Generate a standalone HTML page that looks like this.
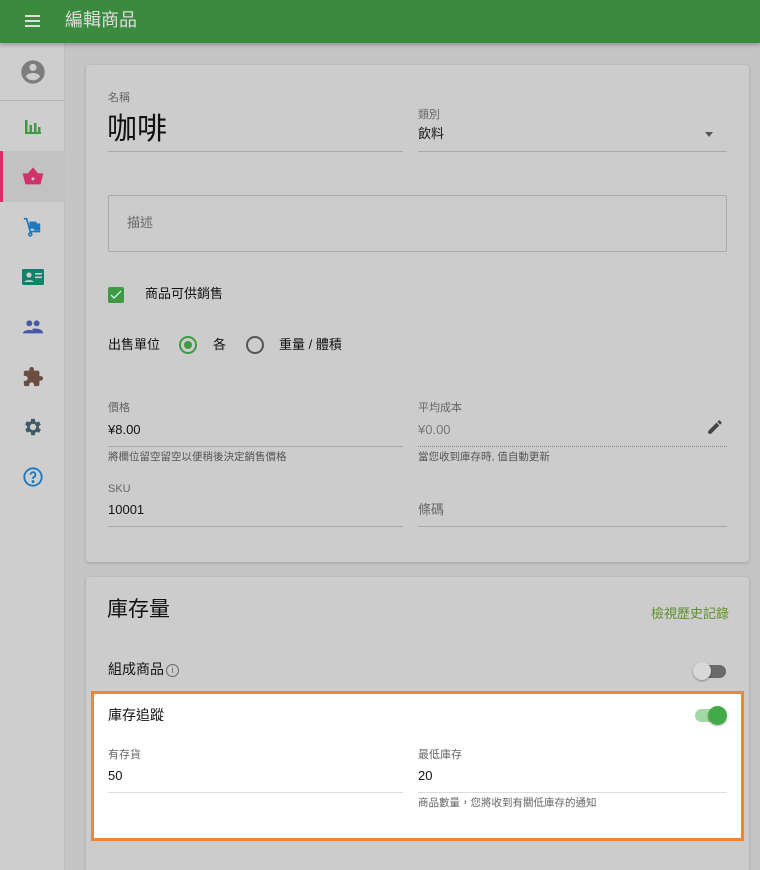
<!DOCTYPE html>
<html style="width:760px;height:870px;overflow:hidden"><head><meta charset="utf-8"><style>
*{margin:0;padding:0;box-sizing:border-box}
body{width:760px;height:870px;overflow:hidden;background:#c5c5c5;font-family:"Liberation Sans","Noto Sans CJK TC",sans-serif;position:relative;color:#111;line-height:1.3}
.a{position:absolute}
.hdr{left:0;top:0;width:760px;height:43px;background:#3a8b3e;box-shadow:0 2px 4px rgba(0,0,0,.25);z-index:3}
.side{left:0;top:43px;width:65px;height:827px;background:#cecece;border-right:1px solid #bdbdbd}
.card{background:#cccccc;border-radius:3px;box-shadow:0 1px 3px rgba(0,0,0,.2)}
.lbl{font-size:11px;color:#666}
.val{font-size:13px;color:#111}
.ln{height:1px;background:#a8a8a8}
.hint{font-size:10.5px;color:#555}
.ic{left:0;width:65px;height:50px;display:flex;align-items:center;justify-content:center}
</style></head><body>
<div class="a hdr">
 <div class="a" style="left:25px;top:15px;width:15px;height:2px;background:#ddd;box-shadow:0 5px 0 #ddd,0 10px 0 #ddd"></div>
 <div class="a" style="left:65px;top:9px;font-size:18px;color:#ddd">編輯商品</div>
</div>
<div class="a side">
 <div class="a ic" style="top:4px"><svg width="28" height="28" viewBox="0 0 24 24"><path fill="#7d7d7d" d="M12 2C6.5 2 2 6.5 2 12s4.5 10 10 10 10-4.5 10-10S17.5 2 12 2zm0 3c1.7 0 3 1.3 3 3s-1.3 3-3 3-3-1.3-3-3 1.3-3 3-3zm0 14.2c-2.5 0-4.7-1.3-6-3.2 0-2 4-3.1 6-3.1s6 1.1 6 3.1c-1.3 1.900-3.5 3.2-6 3.2z"/></svg></div>
 <div class="a" style="left:0;top:57px;width:65px;height:1px;background:#b5b5b5"></div>
 <div class="a ic" style="top:59px"><svg width="20" height="20" viewBox="0 0 20 20" fill="#3f9a43"><rect x="2" y="3" width="2.5" height="14"/><rect x="6.5" y="8" width="2.5" height="9"/><rect x="11" y="6" width="2.5" height="11"/><rect x="15" y="10" width="2.5" height="7"/><rect x="2" y="15" width="16" height="2"/></svg></div>
 <div class="a" style="left:0;top:108px;width:65px;height:51px;background:#c2c2c2;border-left:3px solid #d0336a"></div>
 <div class="a ic" style="top:109px"><svg width="22" height="22" viewBox="0 0 24 24"><path fill="#d0336a" d="M2 9h20l-2.5 10h-15zM7 9l5-6 5 6" stroke="#d0336a" stroke-width="2"/><circle cx="12" cy="14" r="1.6" fill="#ccc"/></svg></div>
 <div class="a ic" style="top:159px"><svg width="22" height="22" viewBox="0 0 24 24" fill="none" stroke="#1c78c0" stroke-width="1.8"><path d="M2 3h3l4 14h11"/><circle cx="9" cy="20" r="1.6"/><rect x="9" y="7" width="6" height="6" fill="#1c78c0"/><rect x="14" y="9" width="5" height="6" fill="#1c78c0"/></svg></div>
 <div class="a ic" style="top:209px"><svg width="24" height="20" viewBox="0 0 24 20"><rect x="1" y="2" width="22" height="16" rx="1.5" fill="#13806a"/><circle cx="8" cy="8" r="2.6" fill="#ccc"/><path d="M3.5 15c0-2.5 9-2.5 9 0z" fill="#ccc"/><rect x="14" y="6" width="7" height="1.6" fill="#ccc"/><rect x="14" y="9.5" width="7" height="1.6" fill="#ccc"/></svg></div>
 <div class="a ic" style="top:259px"><svg width="22" height="16" viewBox="0 0 24 16" fill="#4658a8"><circle cx="8" cy="4" r="3.2"/><circle cx="16" cy="4" r="3.2"/><path d="M1 15c0-5 14-5 14 0zM12 15c0-3 0-4-1-5 4-1 12 0 12 5z"/></svg></div>
 <div class="a ic" style="top:309px"><svg width="22" height="22" viewBox="0 0 24 24"><path fill="#6b4d41" d="M20.5 11H19V7c0-1.1-.9-2-2-2h-4V3.5a2.5 2.5 0 0 0-5 0V5H4c-1.1 0-2 .9-2 2v3.8h1.5c1.5 0 2.7 1.2 2.7 2.7S5 16.2 3.5 16.2H2V20c0 1.1.9 2 2 2h3.8v-1.5c0-1.5 1.2-2.7 2.7-2.7s2.7 1.2 2.7 2.7V22H17c1.1 0 2-.9 2-2v-4h1.5a2.5 2.5 0 0 0 0-5z"/></svg></div>
 <div class="a ic" style="top:359px"><svg width="22" height="22" viewBox="0 0 24 24"><path fill="#3f5a68" d="M19.4 13a7.8 7.8 0 0 0 0-2l2.1-1.6-2-3.5-2.5 1a7 7 0 0 0-1.7-1L15 3h-4l-.4 2.7a7 7 0 0 0-1.7 1l-2.5-1-2 3.5L6.6 11a7.8 7.8 0 0 0 0 2l-2.1 1.6 2 3.5 2.5-1a7 7 0 0 0 1.7 1L11 21h4l.4-2.7a7 7 0 0 0 1.7-1l2.5 1 2-3.5zM13 15.5a3.5 3.5 0 1 1 0-7 3.5 3.5 0 0 1 0 7z" transform="translate(-1 0)"/></svg></div>
 <div class="a ic" style="top:409px"><svg width="22" height="22" viewBox="0 0 24 24" fill="none" stroke="#1c78c0" stroke-width="2"><circle cx="12" cy="12" r="9.5"/><path d="M9.3 9.5a2.7 2.7 0 1 1 3.7 2.5c-.8.4-1 1-1 2"/><circle cx="12" cy="17" r=".6" fill="#1c78c0"/></svg></div>
</div>

<div class="a card" style="left:86px;top:65px;width:663px;height:497px">
 <div class="a lbl" style="left:22px;top:26px">名稱</div>
 <div class="a" style="left:21px;top:45px;font-size:30px;color:#111">咖啡</div>
 <div class="a ln" style="left:22px;top:86px;width:295px"></div>
 <div class="a lbl" style="left:332px;top:43px">類別</div>
 <div class="a val" style="left:332px;top:61px">飲料</div>
 <div class="a" style="left:619px;top:67px;border:4px solid transparent;border-top:5px solid #555"></div>
 <div class="a ln" style="left:332px;top:86px;width:309px"></div>
 <div class="a" style="left:22px;top:130px;width:619px;height:57px;border:1px solid #aaa;border-radius:2px"></div>
 <div class="a" style="left:41px;top:150px;font-size:13px;color:#666">描述</div>
 <div class="a" style="left:22px;top:222px;width:16px;height:16px;background:#3f9a43;border-radius:2px"><svg width="16" height="16" viewBox="0 0 16 16"><path d="M3 8l3 3 7-7" stroke="#cfe" stroke-width="1.3" fill="none"/></svg></div>
 <div class="a val" style="left:59px;top:221px">商品可供銷售</div>
 <div class="a val" style="left:22px;top:272px">出售單位</div>
 <div class="a" style="left:93px;top:271px;width:18px;height:18px;border:2px solid #3f9a43;border-radius:50%"><div class="a" style="left:3px;top:3px;width:8px;height:8px;background:#3f9a43;border-radius:50%"></div></div>
 <div class="a val" style="left:127px;top:272px">各</div>
 <div class="a" style="left:160px;top:271px;width:18px;height:18px;border:2px solid #555;border-radius:50%"></div>
 <div class="a val" style="left:193px;top:272px">重量 / 體積</div>
 <div class="a lbl" style="left:22px;top:336px">價格</div>
 <div class="a val" style="left:22px;top:357px">¥8.00</div>
 <div class="a ln" style="left:22px;top:381px;width:295px"></div>
 <div class="a hint" style="left:22px;top:386px">將欄位留空留空以便稍後決定銷售價格</div>
 <div class="a lbl" style="left:332px;top:336px">平均成本</div>
 <div class="a val" style="left:332px;top:357px;color:#777">¥0.00</div>
 <div class="a" style="left:332px;top:381px;width:309px;border-top:1px dotted #888"></div>
 <svg class="a" style="left:620px;top:353px" width="18" height="18" viewBox="0 0 24 24"><path fill="#444" d="M3 17.25V21h3.75L17.8 9.94l-3.75-3.75zM20.7 7.04a1 1 0 0 0 0-1.41l-2.34-2.34a1 1 0 0 0-1.41 0l-1.83 1.83 3.75 3.75z"/></svg>
 <div class="a hint" style="left:332px;top:386px">當您收到庫存時, 值自動更新</div>
 <div class="a lbl" style="left:22px;top:417px">SKU</div>
 <div class="a val" style="left:22px;top:437px">10001</div>
 <div class="a ln" style="left:22px;top:461px;width:295px"></div>
 <div class="a" style="left:332px;top:437px;font-size:13px;color:#666">條碼</div>
 <div class="a ln" style="left:332px;top:461px;width:309px"></div>
</div>

<div class="a card" style="left:86px;top:577px;width:663px;height:293px;border-radius:3px 3px 0 0">
 <div class="a" style="left:21px;top:19px;font-size:21px;color:#111">庫存量</div>
 <div class="a" style="left:565px;top:29px;font-size:13px;color:#5e8f2e">檢視歷史記錄</div>
 <div class="a val" style="left:22px;top:83px;font-size:14px">組成商品</div>
 <div class="a" style="left:80px;top:87px;width:13px;height:13px;border:1.3px solid #666;border-radius:50%;font-size:9px;color:#666;text-align:center;line-height:11px">i</div>
 <div class="a" style="left:611px;top:88px;width:29px;height:13px;background:#6a6a6a;border-radius:7px"></div>
 <div class="a" style="left:607px;top:85px;width:18px;height:18px;background:#d8d8d8;border-radius:50%;box-shadow:0 1px 2px rgba(0,0,0,.35)"></div>
</div>

<div class="a" style="left:91px;top:691px;width:653px;height:150px;background:#fff;border:3px solid #f08534">
 <div class="a val" style="left:14px;top:12px;font-size:14px">庫存追蹤</div>
 <div class="a" style="left:601px;top:15px;width:29px;height:13px;background:#a3d9a5;border-radius:7px"></div>
 <div class="a" style="left:614px;top:12px;width:19px;height:19px;background:#42ab47;border-radius:50%;box-shadow:0 1px 2px rgba(0,0,0,.3)"></div>
 <div class="a lbl" style="left:14px;top:54px">有存貨</div>
 <div class="a val" style="left:14px;top:74px">50</div>
 <div class="a" style="left:14px;top:98px;width:295px;height:1px;background:#ddd"></div>
 <div class="a lbl" style="left:324px;top:54px">最低庫存</div>
 <div class="a val" style="left:324px;top:74px">20</div>
 <div class="a" style="left:324px;top:98px;width:309px;height:1px;background:#ddd"></div>
 <div class="a hint" style="left:324px;top:103px;color:#666">商品數量，您將收到有關低庫存的通知</div>
</div>
</body></html>
